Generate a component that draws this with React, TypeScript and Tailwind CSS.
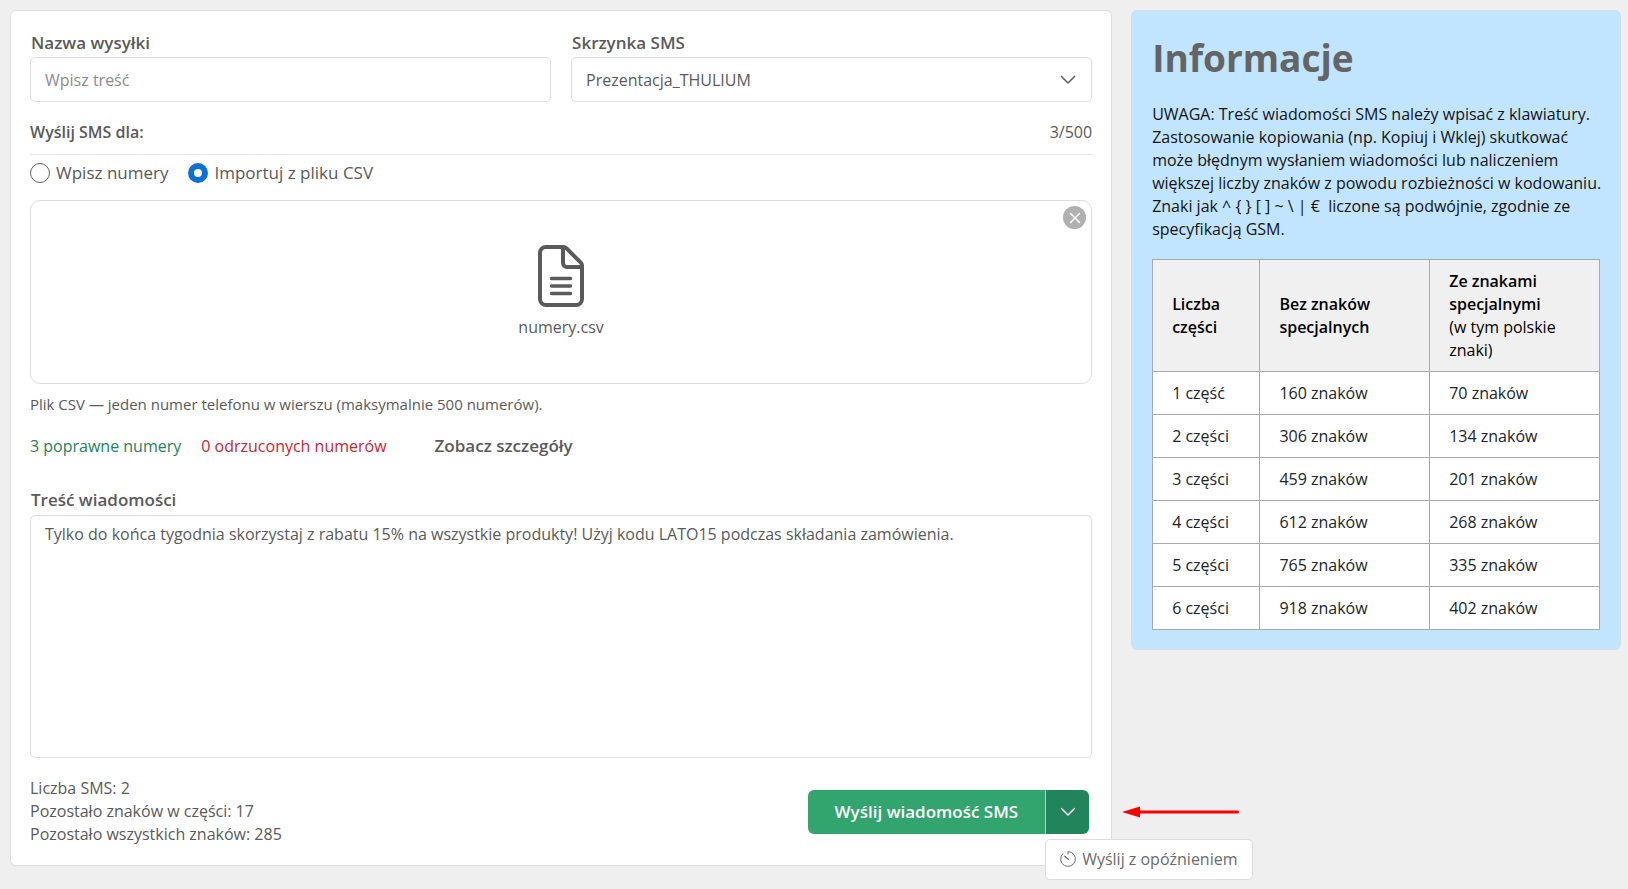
import { useState } from "react";

const parts = [
  { id: "1 część", plain: "160 znaków", special: "70 znaków" },
  { id: "2 części", plain: "306 znaków", special: "134 znaków" },
  { id: "3 części", plain: "459 znaków", special: "201 znaków" },
  { id: "4 części", plain: "612 znaków", special: "268 znaków" },
  { id: "5 części", plain: "765 znaków", special: "335 znaków" },
  { id: "6 części", plain: "918 znaków", special: "402 znaków" },
];

const notice =
  "UWAGA: Treść wiadomości SMS należy wpisać z klawiatury. Zastosowanie kopiowania " +
  "(np. Kopiuj i Wklej) skutkować może błędnym wysłaniem wiadomości lub naliczeniem " +
  "większej liczby znaków z powodu rozbieżności w kodowaniu. Znaki jak ^ { } [ ] ~ \\ | " +
  "€\u00a0 liczone są podwójnie, zgodnie ze specyfikacją GSM.";

const ChevronIcon = ({ className }: { className?: string }) => (
  <svg
    viewBox="0 0 16 16"
    className={className}
    fill="none"
    stroke="currentColor"
    strokeWidth="1.5"
    strokeLinecap="round"
    strokeLinejoin="round"
    aria-hidden="true"
  >
    <path d="M1.5 4.5 8 11l6.5-6.5" />
  </svg>
);

const FileIcon = () => (
  <svg
    viewBox="0 0 46 62"
    className="h-[62px] w-[46px]"
    fill="none"
    stroke="currentColor"
    strokeWidth="4"
    strokeLinecap="round"
    strokeLinejoin="round"
    aria-hidden="true"
  >
    <path d="M8 2h17.5a4 4 0 0 1 2.8 1.2l14.5 14.4A4 4 0 0 1 44 20.5V54a6 6 0 0 1-6 6H8a6 6 0 0 1-6-6V8a6 6 0 0 1 6-6Z" />
    <path d="M25 2.500V18a4 4 0 0 0 4 4h14.500" />
    <path d="M13.500 33.500h19M13.500 41h19M13.500 48.500h19" strokeWidth="3.500" />
  </svg>
);

const TimerIcon = () => (
  <svg
    viewBox="0 0 16 16"
    className="h-4 w-4 shrink-0"
    fill="none"
    stroke="currentColor"
    strokeWidth="1"
    strokeLinecap="round"
    strokeLinejoin="round"
    aria-hidden="true"
  >
    <path d="M8 3V.6A7.400 7.400 0 1 1 2.700 2.800" />
    <path d="M8.300 8.300 4.700 5.200" strokeWidth="1.300" />
  </svg>
);

const radioClass =
  "h-5 w-5 appearance-none rounded-full border border-[#5f5f5f] bg-white checked:border-[6px] checked:border-[#0b72d3]";

const labelClass = "block pl-px text-[17px] leading-6 font-semibold";

const SendButton = () => {
  const [open, setOpen] = useState(true);

  return (
    <div className="relative mr-[3px] flex h-11 text-white">
      <button
        type="button"
        className="rounded-l-md bg-[#32a56e] px-[27px] text-[17px] font-semibold"
      >
        Wyślij wiadomość SMS
      </button>
      <div className="relative flex">
        <button
          type="button"
          aria-label="Więcej opcji"
          aria-expanded={open}
          onClick={() => setOpen(!open)}
          className="flex w-11 items-center justify-center rounded-r-md border-l border-[#a5d6be] bg-[#21845a]"
        >
          <ChevronIcon className="h-4 w-4" />
        </button>
        {open && (
          <div className="absolute top-[49px] left-0 rounded-[5px] border border-[#dcdcdc] bg-white">
            <button
              type="button"
              className="flex h-[39px] items-center gap-1.5 px-3.5 text-base whitespace-nowrap text-[#6b6b6b]"
            >
              <TimerIcon />
              Wyślij z opóźnieniem
            </button>
          </div>
        )}
      </div>
      {/* Arrow pointing at the split button */}
      <svg
        viewBox="0 0 118 12"
        className="absolute top-4 left-full ml-[33px] h-3 w-[118px]"
        aria-hidden="true"
      >
        <path d="M0 6 18 .5v11Z" fill="#fe0000" />
        <path d="M16 6h99.500" stroke="#fe0000" strokeWidth="3" strokeLinecap="round" />
      </svg>
    </div>
  );
};

const MessageForm = () => {
  const [source, setSource] = useState("csv");

  return (
    <form className="rounded-md border border-[#dedede] bg-white px-[19px] pt-5 pb-[19px]">
      <div className="grid grid-cols-2 gap-5">
        <div>
          <label htmlFor="name" className={labelClass}>
            Nazwa wysyłki
          </label>
          <input
            id="name"
            type="text"
            placeholder="Wpisz treść"
            className="mt-0.5 block h-[45px] w-full rounded-[5px] border border-[#dedede] px-3.5 placeholder:text-[#8c8c8c]"
          />
        </div>
        <div>
          <label htmlFor="box" className={labelClass}>
            Skrzynka SMS
          </label>
          <div className="relative mt-0.5">
            <select
              id="box"
              className="block h-[45px] w-full appearance-none rounded-[5px] border border-[#dedede] bg-white px-3.5"
            >
              <option>Prezentacja_THULIUM</option>
            </select>
            <ChevronIcon className="pointer-events-none absolute top-[15px] right-4 h-4 w-4" />
          </div>
        </div>
      </div>

      <div className="mt-[18px] flex justify-between border-b border-[#e5e5e5] pb-2.5 leading-6">
        <span className="font-semibold">Wyślij SMS dla:</span>
        <span>3/500</span>
      </div>

      <div className="mt-1.5 flex gap-5 text-[17px] leading-6">
        <label className="flex items-center gap-1.5">
          <input
            type="radio"
            name="source"
            className={radioClass}
            checked={source === "manual"}
            onChange={() => setSource("manual")}
          />
          Wpisz numery
        </label>
        <label className="flex items-center gap-1.5">
          <input
            type="radio"
            name="source"
            className={radioClass}
            checked={source === "csv"}
            onChange={() => setSource("csv")}
          />
          Importuj z pliku CSV
        </label>
      </div>

      <div className="relative mt-[15px] flex h-[184px] flex-col items-center rounded-[10px] border border-[#dedede] pt-11">
        <button
          type="button"
          aria-label="Usuń plik"
          className="absolute top-[5px] right-[5px] flex h-[23px] w-[23px] items-center justify-center rounded-full bg-[#b0b0b0] text-white"
        >
          <svg
            viewBox="0 0 12 12"
            className="h-3 w-3"
            stroke="currentColor"
            strokeWidth="1.500"
            strokeLinecap="round"
            aria-hidden="true"
          >
            <path d="m1.500 1.500 9 9M10.500 1.500l-9 9" />
          </svg>
        </button>
        <FileIcon />
        <span className="mt-2 leading-6">numery.csv</span>
      </div>

      <p className="mt-2 text-[15px] leading-6">
        Plik CSV — jeden numer telefonu w wierszu (maksymalnie 500 numerów).
      </p>

      <div className="mt-[18px] flex gap-5 leading-6">
        <span className="text-[#21845a]">3 poprawne numery</span>
        <span className="text-[#cb2431]">0 odrzuconych numerów</span>
        <button type="button" className="ml-7 text-[17px] font-semibold">
          Zobacz szczegóły
        </button>
      </div>

      <label htmlFor="message" className={`mt-[30px] ${labelClass}`}>
        Treść wiadomości
      </label>
      <textarea
        id="message"
        className="mt-[3px] block h-[243px] w-full resize-none rounded-[5px] border border-[#dedede] px-3.5 py-1.5 leading-6"
        defaultValue="Tylko do końca tygodnia skorzystaj z rabatu 15% na wszystkie produkty! Użyj kodu LATO15 podczas składania zamówienia."
      />

      <div className="mt-[19px] flex items-center justify-between">
        <div className="leading-[23px]">
          <p>Liczba SMS: 2</p>
          <p>Pozostało znaków w części: 17</p>
          <p>Pozostało wszystkich znaków: 285</p>
        </div>
        <SendButton />
      </div>
    </form>
  );
};

const headClass = "border border-[#a9a9a9] px-[19px] font-semibold";
const cellClass = "h-[43px] border border-[#a9a9a9] px-[19px]";

const InfoPanel = () => (
  <aside className="rounded-md border border-[#d5dde3] bg-[#c1e4ff] px-5 pt-[19px] pb-[19px] leading-[23px] text-[#141414]">
    <h1 className="text-[37px] leading-[56px] font-bold text-[#646464]">Informacje</h1>
    <p className="mt-[17px] -mr-0.5">{notice}</p>
    <table className="mt-[18px] w-full table-fixed border-collapse bg-white text-left text-[#212529]">
      <colgroup>
        <col className="w-[24%]" />
        <col className="w-[38%]" />
        <col className="w-[38%]" />
      </colgroup>
      <thead className="bg-[#f0f0f0] text-black">
        <tr className="h-[112px]">
          <th className={headClass}>Liczba części</th>
          <th className={headClass}>
            Bez znaków
            <br />
            specjalnych
          </th>
          <th className={headClass}>
            Ze znakami specjalnymi
            <br />
            <span className="font-normal">(w tym polskie znaki)</span>
          </th>
        </tr>
      </thead>
      <tbody>
        {parts.map((part) => (
          <tr key={part.id}>
            <td className={cellClass}>{part.id}</td>
            <td className={cellClass}>{part.plain}</td>
            <td className={cellClass}>{part.special}</td>
          </tr>
        ))}
      </tbody>
    </table>
  </aside>
);

export default function App() {
  return (
    <div className="min-h-screen overflow-x-hidden bg-[#efefef] pt-[10px] pr-[7px] pl-[10px] font-['Open_Sans','Noto_Sans',sans-serif] text-base text-[#5a5a5a]">
      <main className="grid grid-cols-[9fr_4fr] items-start gap-[19px]">
        <MessageForm />
        <InfoPanel />
      </main>
    </div>
  );
}
